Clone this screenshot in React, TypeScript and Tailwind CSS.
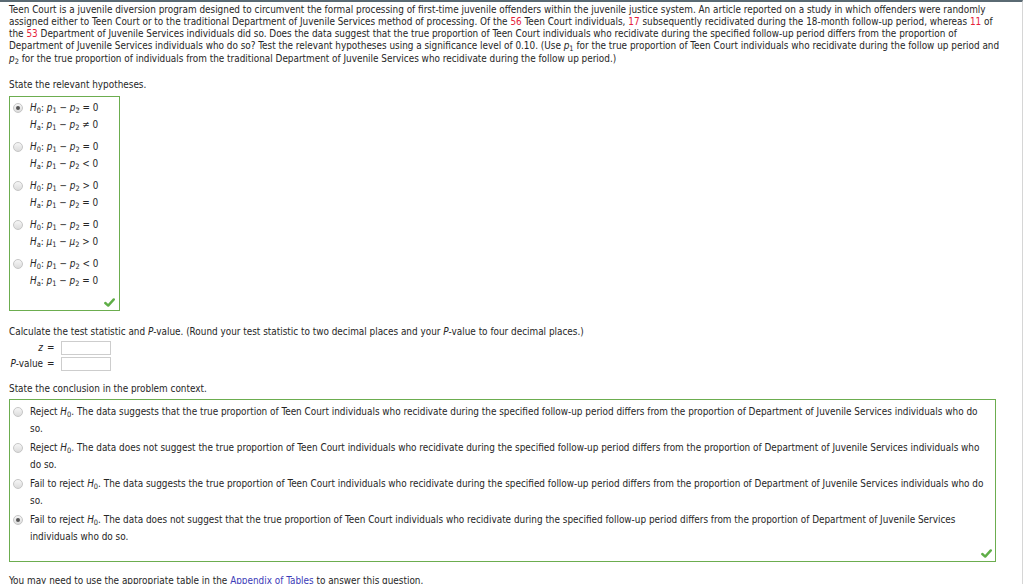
import React from "react";

function Radio({ checked }: { checked?: boolean }) {
  return (
    <span className="w-[10px] h-[10px] rounded-full border border-[#c6c6c6] bg-linear-to-b from-[#f6f6f6] to-[#dcdcdc] flex items-center justify-center shrink-0">
      {checked && <span className="w-[4px] h-[4px] rounded-full bg-[#555]" />}
    </span>
  );
}

function Check() {
  return (
    <svg width="11" height="9" viewBox="0 0 11 9" className="block">
      <path
        d="M1.3 5 L4.2 7.6 L9.8 1.4"
        stroke="#5fae47"
        strokeWidth="2.4"
        fill="none"
        strokeLinecap="round"
        strokeLinejoin="round"
      />
    </svg>
  );
}

function V({ v, s }: { v: string; s: string }) {
  return (
    <>
      <i>{v}</i>
      <sub>{s}</sub>
    </>
  );
}

function R({ children }: { children: React.ReactNode }) {
  return <span className="text-[#e5203a]">{children}</span>;
}

type Hyp = { h0: React.ReactNode; ha: React.ReactNode; checked?: boolean };

const hyps: Hyp[] = [
  {
    checked: true,
    h0: (
      <>
        <V v="H" s="0" />: <V v="p" s="1" /> − <V v="p" s="2" /> = 0
      </>
    ),
    ha: (
      <>
        <V v="H" s="a" />: <V v="p" s="1" /> − <V v="p" s="2" /> ≠ 0
      </>
    ),
  },
  {
    h0: (
      <>
        <V v="H" s="0" />: <V v="p" s="1" /> − <V v="p" s="2" /> = 0
      </>
    ),
    ha: (
      <>
        <V v="H" s="a" />: <V v="p" s="1" /> − <V v="p" s="2" /> &lt; 0
      </>
    ),
  },
  {
    h0: (
      <>
        <V v="H" s="0" />: <V v="p" s="1" /> − <V v="p" s="2" /> &gt; 0
      </>
    ),
    ha: (
      <>
        <V v="H" s="a" />: <V v="p" s="1" /> − <V v="p" s="2" /> = 0
      </>
    ),
  },
  {
    h0: (
      <>
        <V v="H" s="0" />: <V v="p" s="1" /> − <V v="p" s="2" /> = 0
      </>
    ),
    ha: (
      <>
        <V v="H" s="a" />: <V v="μ" s="1" /> − <V v="μ" s="2" /> &gt; 0
      </>
    ),
  },
  {
    h0: (
      <>
        <V v="H" s="0" />: <V v="p" s="1" /> − <V v="p" s="2" /> &lt; 0
      </>
    ),
    ha: (
      <>
        <V v="H" s="a" />: <V v="p" s="1" /> − <V v="p" s="2" /> = 0
      </>
    ),
  },
];

type Concl = { l1: React.ReactNode; l2: string; checked?: boolean };

const concls: Concl[] = [
  {
    l1: (
      <>
        Reject <V v="H" s="0" />. The data suggests that the true proportion of Teen Court individuals who recidivate
        during the specified follow-up period differs from the proportion of Department of Juvenile Services individuals
        who do
      </>
    ),
    l2: "so.",
  },
  {
    l1: (
      <>
        Reject <V v="H" s="0" />. The data does not suggest the true proportion of Teen Court individuals who recidivate
        during the specified follow-up period differs from the proportion of Department of Juvenile Services individuals
        who
      </>
    ),
    l2: "do so.",
  },
  {
    l1: (
      <>
        Fail to reject <V v="H" s="0" />. The data suggests the true proportion of Teen Court individuals who recidivate
        during the specified follow-up period differs from the proportion of Department of Juvenile Services individuals
        who do
      </>
    ),
    l2: "so.",
  },
  {
    checked: true,
    l1: (
      <>
        Fail to reject <V v="H" s="0" />. The data does not suggest that the true proportion of Teen Court individuals
        who recidivate during the specified follow-up period differs from the proportion of Department of Juvenile
        Services
      </>
    ),
    l2: "individuals who do so.",
  },
];

export default function App() {
  return (
    <div className="w-[1024px] h-[584px] overflow-hidden bg-white">
      <div className="w-[1023px] h-[584px] border-t-2 border-t-[#5a6a73] border-r border-r-[#d6d6d6] pl-[9px] pt-[2px] font-['DejaVu_Sans_Condensed','DejaVu_Sans',sans-serif] text-[9.9px] leading-[12px] text-[#262626]">
        {/* Problem statement */}
        <div className="whitespace-nowrap">
          <div>
            Teen Court is a juvenile diversion program designed to circumvent the formal processing of first-time
            juvenile offenders within the juvenile justice system. An article reported on a study in which offenders
            were randomly
          </div>
          <div>
            assigned either to Teen Court or to the traditional Department of Juvenile Services method of processing.
            Of the <R>56</R> Teen Court individuals, <R>17</R> subsequently recidivated during the 18-month follow-up
            period, whereas <R>11</R> of
          </div>
          <div>
            the <R>53</R> Department of Juvenile Services individuals did so. Does the data suggest that the true
            proportion of Teen Court individuals who recidivate during the specified follow-up period differs from the
            proportion of
          </div>
          <div>
            Department of Juvenile Services individuals who do so? Test the relevant hypotheses using a significance
            level of 0.10. (Use <V v="p" s="1" /> for the true proportion of Teen Court individuals who recidivate during
            the follow up period and
          </div>
          <div className="mt-[1px]">
            <V v="p" s="2" /> for the true proportion of individuals from the traditional Department of Juvenile
            Services who recidivate during the follow up period.)
          </div>
        </div>

        {/* Hypotheses */}
        <div className="mt-[14px]">State the relevant hypotheses.</div>
        <div className="mt-[5px] w-[111px] border border-[#6cad4f] pt-[2px] pl-[3px] leading-[17px]">
          <div className="flex flex-col gap-[5px]">
            {hyps.map((h, i) => (
              <div key={i} className="flex">
                <div className="h-[17px] flex items-center">
                  <Radio checked={h.checked} />
                </div>
                <div className="ml-[7px] whitespace-nowrap">
                  <div className="h-[17px]">{h.h0}</div>
                  <div className="h-[17px]">{h.ha}</div>
                </div>
              </div>
            ))}
          </div>
          <div className="h-[21px] flex justify-end items-end pb-[3px] pr-[4px]">
            <Check />
          </div>
        </div>

        {/* Test statistic */}
        <div className="mt-[15px] whitespace-nowrap">
          Calculate the test statistic and <i>P</i>-value. (Round your test statistic to two decimal places and your{" "}
          <i>P</i>-value to four decimal places.)
        </div>
        <div className="mt-[2px]">
          <div className="flex items-center h-[16px]">
            <span className="w-[34px] text-right">
              <i>z</i>
            </span>
            <span className="w-[14px] ml-[4px]">=</span>
            <span className="w-[50px] h-[14px] border border-[#cdcdcd] bg-white" />
          </div>
          <div className="flex items-center h-[16px]">
            <span className="w-[34px] text-right whitespace-nowrap">
              <i>P</i>-value
            </span>
            <span className="w-[14px] ml-[4px]">=</span>
            <span className="w-[50px] h-[14px] border border-[#cdcdcd] bg-white" />
          </div>
        </div>

        {/* Conclusion */}
        <div className="mt-[11px]">State the conclusion in the problem context.</div>
        <div className="mt-[4px] w-[987px] border border-[#6cad4f] pt-[3px] pl-[3px] leading-[17px]">
          <div className="flex flex-col gap-[2px]">
            {concls.map((c, i) => (
              <div key={i} className="flex">
                <div className="h-[17px] flex items-center">
                  <Radio checked={c.checked} />
                </div>
                <div className="ml-[7px] whitespace-nowrap">
                  <div className="h-[17px]">{c.l1}</div>
                  <div className="h-[17px]">{c.l2}</div>
                </div>
              </div>
            ))}
          </div>
          <div className="h-[16px] flex justify-end items-center pr-[3px]">
            <Check />
          </div>
        </div>

        <div className="mt-[13px] whitespace-nowrap">
          You may need to use the appropriate table in the{" "}
          <span className="text-[#3b3bb8]">Appendix of Tables</span> to answer this question.
        </div>
      </div>
    </div>
  );
}
